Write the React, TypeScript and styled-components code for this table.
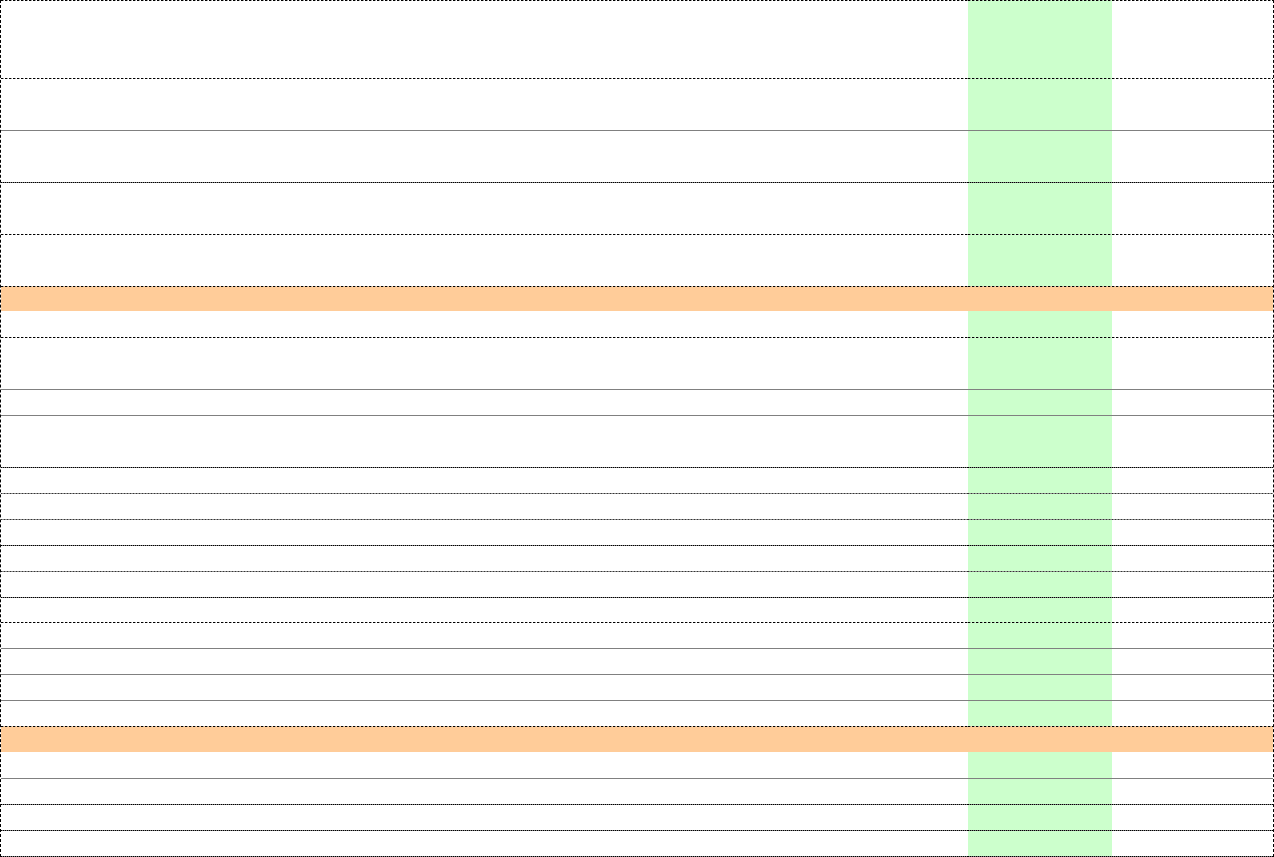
import React from 'react';
import styled, { createGlobalStyle } from 'styled-components';

type Line = 'dash' | 'solid' | 'dot' | 'gdash' | 'none';

const Color = {
  green: '#ccffcc',
  orange: '#ffcc99',
  white: '#ffffff',
  rule: '#808080',
};

// each kind of ruled line, painted as the top pixel of a cell
const rules: Record<Line, string> = {
  dash: 'repeating-linear-gradient(90deg, #000 0 2px, #9a9a9a 2px 3px, transparent 3px 4px)',
  solid: `linear-gradient(${Color.rule}, ${Color.rule})`,
  dot: 'repeating-linear-gradient(90deg, #000 0 1px, #808080 1px 2px)',
  gdash: 'repeating-linear-gradient(90deg, #333 0 1px, #8c8c8c 1px 3px)',
  none: 'none',
};

const GlobalStyle = createGlobalStyle`
  html, body {
    margin: 0;
    padding: 0;
    background: #fff;
  }
  body {
    font-family: "Liberation Sans", Arial, sans-serif;
    font-size: 11px;
  }
`;

const Sheet = styled.div`
  width: 1274px;
  box-sizing: border-box;
  border-left: 1px dashed #000;
  border-right: 1px dashed #000;
  display: flex;
  flex-direction: column;
`;

const Row = styled.div<{ $h: number }>`
  display: grid;
  grid-template-columns: 967px 144px 1fr;
  height: ${(p) => p.$h}px;
`;

const Cell = styled.div<{ $fill: string; $line: Line }>`
  background-color: ${(p) => p.$fill};
  background-image: ${(p) => rules[p.$line]};
  background-size: 100% 1px;
  background-repeat: no-repeat;
`;

interface RowData {
  h: number;
  line: Line;
  band?: boolean;
}

const rows: RowData[] = [
  { h: 78, line: 'dash' },
  { h: 52, line: 'dash' },
  { h: 52, line: 'solid' },
  { h: 52, line: 'dot' },
  { h: 52, line: 'dash' },
  { h: 25, line: 'dash', band: true },
  { h: 26, line: 'none' },
  { h: 52, line: 'dash' },
  { h: 26, line: 'solid' },
  { h: 52, line: 'solid' },
  { h: 26, line: 'dot' },
  { h: 26, line: 'gdash' },
  { h: 26, line: 'gdash' },
  { h: 26, line: 'dot' },
  { h: 26, line: 'gdash' },
  { h: 25, line: 'dot' },
  { h: 26, line: 'dash' },
  { h: 26, line: 'solid' },
  { h: 26, line: 'solid' },
  { h: 26, line: 'solid' },
  { h: 26, line: 'dash', band: true },
  { h: 26, line: 'none' },
  { h: 26, line: 'solid' },
  { h: 26, line: 'dot' },
  { h: 26, line: 'dot' },
  { h: 1, line: 'dot' },
];

const App = () => {
  return (
    <>
      <GlobalStyle />
      <Sheet>
        {rows.map((r, i) => {
          const base = r.band ? Color.orange : Color.white;
          const mid = r.band ? Color.orange : Color.green;
          return (
            <Row key={i} $h={r.h}>
              <Cell $fill={base} $line={r.line} />
              <Cell $fill={mid} $line={r.line} />
              <Cell $fill={base} $line={r.line} />
            </Row>
          );
        })}
      </Sheet>
    </>
  );
};

export default App;
